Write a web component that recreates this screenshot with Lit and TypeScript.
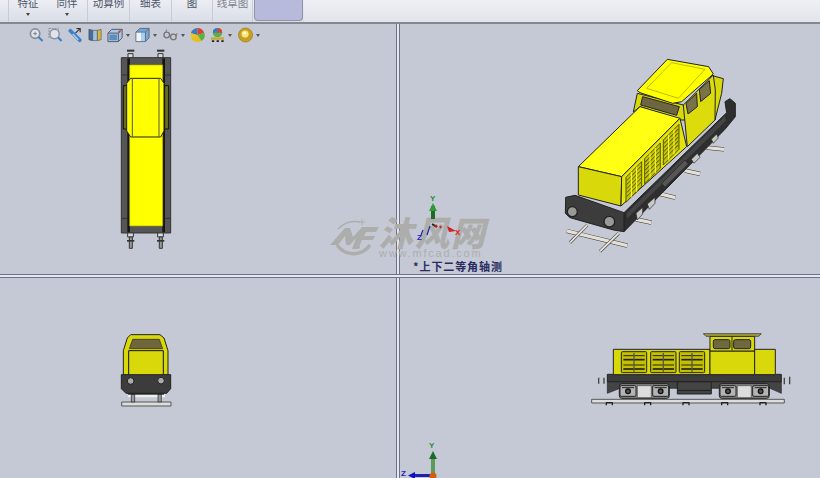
import { LitElement, html, css, svg } from "lit";
import { customElement } from "lit/decorators.js";

const bar = (x1: number, y1: number, x2: number, y2: number, w: number, c = "#e4e0d4") => svg`
  <line x1=${x1} y1=${y1} x2=${x2} y2=${y2} stroke="#333" stroke-width=${w + 3}/>
  <line x1=${x1} y1=${y1} x2=${x2} y2=${y2} stroke=${c} stroke-width=${w}/>`;

const topView = svg`
<g transform="translate(100 45) scale(.3333)" stroke-linejoin="round">
  ${[92, 182].map((x) => svg`
    <rect x=${x - 11} y="14" width="22" height="6" fill="#333"/>
    <rect x=${x - 8} y="26" width="15" height="13" fill="#ddd" stroke="#333" stroke-width="3"/>
    <rect x=${x - 9} y="562" width="17" height="14" fill="#ddd" stroke="#333" stroke-width="3"/>
    <rect x=${x - 4} y="576" width="9" height="34" fill="#999" stroke="#333" stroke-width="3"/>
    <rect x=${x - 11} y="585" width="22" height="5" fill="#333"/>`)}
  <rect x="64" y="38" width="148" height="526" fill="#555" stroke="#333" stroke-width="3"/>
  <path d="M64 520 H82 M194 520 H212 M64 90 H82 M194 90 H212" stroke="#333" stroke-width="3"/>
  <rect x="82" y="40" width="8" height="522" fill="#151515"/>
  <rect x="187" y="40" width="8" height="522" fill="#151515"/>
  <rect x="89" y="60" width="99" height="483" fill="#ffff00" stroke="#a8a800" stroke-width="2"/>
  <rect x="70" y="122" width="12" height="130" fill="#6c6c20" stroke="#111" stroke-width="3"/>
  <rect x="194" y="122" width="12" height="130" fill="#6c6c20" stroke="#111" stroke-width="3"/>
  <path d="M92 100 H182 L192 115 V258 L182 276 H92 L80 258 V115Z" fill="#ffff00" stroke="#222" stroke-width="3"/>
  <path d="M97 100 V276 M177 100 V276" stroke="#555" stroke-width="3" fill="none"/>
</g>`;

const louvre = (x: number, y: number) => svg`
  <g transform="translate(${x} ${y}) skewY(-45)" fill="none" stroke="#3a3a00" stroke-width="2">
    <rect x="0" y="0" width="47" height="75" fill="#c4c400"/>
    ${[12, 24, 36, 48, 60].map((v) => svg`<line x1="2" y1=${v} x2="45" y2=${v} stroke-width="2.5"/>`)}
    <line x1="16" y1="0" x2="16" y2="75" stroke="#ffff40" stroke-width="3"/>
    <line x1="32" y1="0" x2="32" y2="75" stroke="#ffff40" stroke-width="3"/>
  </g>`;

const isoView = svg`
<g transform="translate(550 50) scale(.3333)" stroke-linejoin="round">
  ${bar(470, 293, 522, 298, 10)}
  ${bar(405, 362, 450, 372, 10)}
  ${bar(330, 432, 376, 443, 10)}
  ${bar(258, 508, 304, 518, 10)}
  ${bar(50, 543, 232, 587, 10)}
  ${bar(60, 578, 112, 525, 6)}
  ${bar(150, 604, 206, 550, 6)}
  <path d="M222 488 L530 188 L525 155 L540 146 L556 160 L556 200 L525 238 L222 545Z" fill="#2e2e2e" stroke="#222" stroke-width="3"/>
  <path d="M230 490 L525 198 L528 212 L232 505Z" fill="#444"/>
  <path d="M258 490 L278 472 V492 L262 510Z M292 462 L315 442 V460 L298 478Z M424 328 L442 310 L450 322 L432 340Z M484 268 L500 252 L505 264 L490 280Z" fill="#c8c8c8" stroke="#222" stroke-width="2"/>
  <path d="M335 400 L405 330 L415 342 L345 412Z" fill="#555" stroke="#222" stroke-width="2"/>
  <path d="M47 442 L75 436 L222 488 V545 L190 540 L60 503 L46 490Z" fill="#3c3c3c" stroke="#222" stroke-width="3"/>
  <circle cx="67" cy="485" r="15" fill="#999" stroke="#222" stroke-width="4"/>
  <circle cx="178" cy="515" r="16" fill="#999" stroke="#222" stroke-width="4"/>
  <path d="M484 76 L520 86 L515 130 L495 210 L478 100Z" fill="#d8d80a" stroke="#222" stroke-width="3"/>
  <path d="M250 186 L262 130 L400 165 L412 210 L390 210 L270 170Z" fill="#d8d80a" stroke="#222" stroke-width="3"/>
  <path d="M278 140 L388 170 L380 196 L272 165Z" fill="#6e6640" stroke="#222" stroke-width="3"/>
  <path d="M400 165 L490 75 L496 120 L495 210 L412 290 Z" fill="#dcdc0c" stroke="#222" stroke-width="3"/>
  <path d="M408 160 L440 130 L442 170 L414 192Z M448 118 L478 92 L482 130 L452 155Z" fill="#7a7248" stroke="#222" stroke-width="3"/>
  <path d="M262 122 L352 28 L476 50 L490 72 L395 155 L368 160 L270 128Z" fill="#ffff00" stroke="#222" stroke-width="3"/>
  <path d="M290 115 L365 38 L465 58 L385 145Z" fill="#ffff00" stroke="#999900" stroke-width="2"/>
  <path d="M85 350 L270 170 L390 205 L215 380Z" fill="#ffff14" stroke="#222" stroke-width="3"/>
  <path d="M85 350 L215 380 L213 468 L85 435Z" fill="#d8d80a" stroke="#222" stroke-width="3"/>
  <path d="M215 380 L390 205 L410 290 L213 468Z" fill="#e4e40c" stroke="#222" stroke-width="3"/>
  ${louvre(228, 382)}
  ${louvre(284, 326)}
  ${louvre(340, 270)}
</g>`;

const frontView = svg`
<g transform="translate(100 320) scale(.3333)" stroke-linejoin="round">
  <rect x="65" y="246" width="148" height="12" fill="#ddd" stroke="#555" stroke-width="3"/>
  <path d="M84 220 H195 V232 H84Z" fill="#eee"/>
  <rect x="94" y="222" width="10" height="24" fill="#999" stroke="#222" stroke-width="2"/>
  <rect x="174" y="222" width="10" height="24" fill="#999" stroke="#222" stroke-width="2"/>
  <rect x="84" y="218" width="108" height="6" fill="#222"/>
  <path d="M92 44 H180 L192 54 L204 92 V165 H70 V92 L82 54Z" fill="#d8d80a" stroke="#222" stroke-width="3"/>
  <path d="M98 58 H178 L188 86 H88Z" fill="#70663e" stroke="#222" stroke-width="2"/>
  <path d="M86 165 V92 H190 V165" fill="#d8d80a" stroke="#111" stroke-width="3"/>
  <path d="M64 164 H212 V206 L200 220 H78 L64 206Z" fill="#3c3c3c" stroke="#222" stroke-width="3"/>
  <circle cx="92" cy="183" r="10" fill="#aaa" stroke="#222" stroke-width="3"/>
  <circle cx="183" cy="182" r="10" fill="#aaa" stroke="#222" stroke-width="3"/>
</g>`;

const bogie = (x: number) => svg`
  <rect x=${x} y="176" width="150" height="44" rx="8" fill="#888" stroke="#222" stroke-width="3"/>
  <rect x=${x + 54} y="182" width="42" height="36" fill="#dcdcdc" stroke="#444" stroke-width="2"/>
  ${[x + 26, x + 124].map((cx) => svg`
    <rect x=${cx - 24} y="182" width="48" height="32" rx="4" fill="#b4b4b4" stroke="#222" stroke-width="3"/>
    <circle cx=${cx} cy="199" r="7" fill="#555" stroke="#111" stroke-width="4"/>
    <path d="M${cx - 18} 188 h36" stroke="#222" stroke-width="3"/>`)}`;

const sideView = svg`
<g transform="translate(580 325) scale(.3333)" stroke-linejoin="round">
  <rect x="35" y="223" width="578" height="11" fill="#ddd" stroke="#555" stroke-width="3"/>
  ${[88, 203, 318, 434, 549].map((x) => svg`<path d="M${x - 9} 241 V233 H${x + 9} V241" fill="none" stroke="#222" stroke-width="4"/>`)}
  <path d="M56 158 V176 M72 158 V176 M613 158 V178 M629 155 V178" stroke="#444" stroke-width="4" fill="none"/>
  <path d="M82 170 H604 V205 L570 190 H120 L82 205Z" fill="#444" stroke="#222" stroke-width="2"/>
  <rect x="292" y="170" width="102" height="37" fill="#444" stroke="#222" stroke-width="3"/>
  <rect x="294" y="195" width="98" height="3" fill="#222"/>
  ${bogie(118)}
  ${bogie(418)}
  <rect x="82" y="148" width="522" height="22" fill="#3c3c3c" stroke="#222" stroke-width="3"/>
  <rect x="100" y="73" width="290" height="76" fill="#d8d80a" stroke="#222" stroke-width="3"/>
  <rect x="390" y="78" width="134" height="71" fill="#d8d80a" stroke="#222" stroke-width="3"/>
  <rect x="524" y="73" width="62" height="76" fill="#d8d80a" stroke="#222" stroke-width="3"/>
  <rect x="390" y="34" width="134" height="44" fill="#d8d80a" stroke="#222" stroke-width="3"/>
  <path d="M370 26 H544 L536 34 H378Z" fill="#a8a040" stroke="#222" stroke-width="2"/>
  <rect x="400" y="44" width="50" height="27" rx="5" fill="#70683e" stroke="#222" stroke-width="3"/>
  <rect x="461" y="44" width="51" height="27" rx="5" fill="#70683e" stroke="#222" stroke-width="3"/>
  <path d="M456 36 V76" stroke="#222" stroke-width="3"/>
  ${[124, 212, 298].map((x) => svg`
    <rect x=${x} y="80" width="76" height="63" rx="3" fill="#c4c000" stroke="#222" stroke-width="3"/>
    ${[92, 104, 120, 132].map((y) => svg`<line x1=${x + 6} y1=${y} x2=${x + 70} y2=${y} stroke="#222" stroke-width=${y === 104 || y === 132 ? 5 : 3}/>`)}
    <line x1=${x + 38} y1="84" x2=${x + 38} y2="140" stroke="#555" stroke-width="4"/>`)}
</g>`;

const icons = [
  svg`<circle cx="6.5" cy="6.5" r="5" fill="#dfe3ea" stroke="#8a8f98" stroke-width="1.8"/><path d="M4.5 6.5h4M6.5 4.5v4" stroke="#7a7f88"/><path d="M10 10l4.5 4.5" stroke="#3f7fc4" stroke-width="2.2"/>`,
  svg`<rect x="1" y="1" width="10" height="10" fill="none" stroke="#8a8f98" stroke-dasharray="2 1"/><circle cx="7" cy="7" r="5" fill="#dfe3ea" stroke="#8a8f98" stroke-width="1.5"/><path d="M10.5 10.5l4 4" stroke="#3f7fc4" stroke-width="2.2"/>`,
  svg`<path d="M2.5 3.5l10 10" stroke="#3f7fc4" stroke-width="4" stroke-linecap="round"/><path d="M5 7l6 6" stroke="#a8d0f0" stroke-width="1.6"/><path d="M8 6l5-5M9 1h4v4" stroke="#333" fill="none" stroke-width="1.2"/>`,
  svg`<path d="M1 2l4 1v11l-4-1Z" fill="#3f6fa8" stroke="#444" stroke-width=".7"/><path d="M5 3h5v11H5Z" fill="#9fc2e4" stroke="#555" stroke-width=".7"/><path d="M10 3l4-1v11l-4 1Z" fill="#d4b83c" stroke="#555" stroke-width=".7"/>`,
  svg`<path d="M1 6l4-4h11v9l-4 4H1Z" fill="#a8c8e8" stroke="#555"/><path d="M1 6h11v9M12 6l4-4" fill="none" stroke="#555"/><rect x="2.5" y="7.5" width="8" height="6" fill="#5c8cc4"/><circle cx="13" cy="4.5" r="1.2" fill="#d04040"/>`,
  svg`<path d="M1 5l4-4h10v10l-4 4H1Z" fill="#6ea8e4" stroke="#666"/><path d="M1 5h10v10M11 5l4-4" fill="none" stroke="#666"/><rect x="1.5" y="5.5" width="5" height="9" fill="#f0f4f8"/><rect x="6.5" y="5.5" width="4" height="9" fill="#a8d0f4"/>`,
  svg`<circle cx="4" cy="8" r="3" fill="none" stroke="#777" stroke-width="1.4"/><circle cx="11" cy="10" r="3" fill="none" stroke="#777" stroke-width="1.4"/><path d="M7 8l1 1M14 9l1-3M3 5l1-3" stroke="#777" fill="none"/>`,
  svg`<circle cx="8" cy="8" r="7.5" fill="#e8c828"/><path d="M8 8V.5a7.5 7.5 0 0 1 7 5Z" fill="#d84040"/><path d="M8 8L1 6A7.5 7.5 0 0 1 8 .5Z" fill="#3c78c8"/><path d="M8 8l7-2.500A7.5 7.5 0 0 1 12 14.500Z" fill="#58b048"/><path d="M8 8l4 6.500a7.5 7.5 0 0 1-10.500-3Z" fill="#e4c020"/>`,
  svg`<circle cx="8" cy="5.500" r="5" fill="#58b048"/><path d="M8 .5a5 5 0 0 1 5 5H8Z" fill="#d84040"/><path d="M8 .5a5 5 0 0 0-5 5h5Z" fill="#3c78c8"/><path d="M1 10.500h14v2.500H1Z" fill="#c8a830"/><path d="M2 14.500h2.500M7 14.500h2.500M12 14.500h2.500" stroke="#222" stroke-width="2"/>`,
  svg`<circle cx="8" cy="8" r="7.500" fill="#c8a020" stroke="#907010" stroke-width=".6"/><circle cx="7.500" cy="7" r="3.800" fill="#f8e878"/><circle cx="7" cy="6" r="1.600" fill="#fffbe0"/>`,
];
const widths = [15, 15, 15, 15, 17, 16, 16, 16, 16, 16];
const slots = [19, 20, 20, 19, 28, 28, 27, 20, 28, 24];
const carets = [0, 0, 0, 0, 1, 1, 1, 0, 1, 1];

@customElement("app-root")
export class AppRoot extends LitElement {
  static styles = css`
    :host { display: block; width: 820px; height: 478px; overflow: hidden; position: relative; background: #c5c9d6; font-family: "Noto Sans CJK SC", "Liberation Sans", sans-serif; }
    .ribbon { display: flex; height: 22px; background: linear-gradient(#eceef3, #d9dde7); border-bottom: 2px solid #85898f; box-sizing: content-box; }
    .tab { position: relative; display: flex; justify-content: center; height: 22px; overflow: hidden; font-size: 10.5px; color: #4c5568; border-right: 1px solid #c8ccd6; box-sizing: border-box; line-height: 11px; }
    .tab span { margin-top: -3px; }
    .tab i { position: absolute; left: 50%; top: 13px; margin-left: -2px; width: 0; height: 0; border: 2.5px solid transparent; border-top: 3px solid #444; }
    .t0 { width: 9px; } .t1 { width: 38px; border-right: none; } .t2 { width: 41px; } .t3 { width: 42px; } .t4 { width: 42px; } .t5 { width: 41px; } .t6 { width: 40px; color: #7f8492; }
    .active { width: 49px; height: 21px; margin-left: 1px; background: #b7badb; border: 1px solid #8f93a8; border-top: none; border-radius: 0 0 4px 4px; box-sizing: border-box; }
    .rest { flex: 1; background: linear-gradient(#eff0f4, #e2e4ec); margin-left: 1px; }
    .view { display: grid; grid-template-columns: 396px 4px 1fr; grid-template-rows: 250px 4px 1fr; height: 454px; }
    .pane { position: relative; overflow: hidden; }
    .pane svg.art { position: absolute; inset: 0; width: 100%; height: 100%; }
    .vline { grid-column: 2; grid-row: 1 / 4; background: #e6e8ee; border-left: 1px solid #6d7189; border-right: 1px solid #6d7189; }
    .hline { grid-column: 1 / 4; grid-row: 2; background: #e6e8ee; border-top: 1px solid #6d7189; border-bottom: 1px solid #6d7189; position: relative; }
    .hud { position: absolute; left: 29px; top: 3px; display: flex; align-items: center; z-index: 1; }
    .hud .it { display: flex; align-items: center; gap: 2px; }
    .hud svg { display: block; height: 16px; }
    .hud i { width: 0; height: 0; border: 2.5px solid transparent; border-top: 3px solid #555; margin-top: 3px; }
    .over { position: absolute; inset: 0; pointer-events: none; }
    .wm { position: absolute; left: 325px; top: 212px; display: flex; align-items: flex-start; }
    .wm-text { margin-top: 5px; display: flex; flex-direction: column; color: #adaeac; }
    .wm-cn { font-size: 34px; font-weight: 900; line-height: 30px; letter-spacing: 2px; font-style: italic; white-space: nowrap; }
    .wm-en { font-family: "Liberation Sans", sans-serif; font-size: 11px; line-height: 12px; letter-spacing: 1.8px; white-space: nowrap; }
    .cap { position: absolute; left: 413px; top: 259px; font-size: 11px; font-weight: 700; color: #2a2c62; line-height: 14px; letter-spacing: .9px; }
    .ax { position: absolute; font-family: "Liberation Sans", sans-serif; font-size: 8px; font-weight: 700; line-height: 8px; }
  `;

  render() {
    return html`
      <div class="ribbon">
        <div class="tab t0"></div>
        <div class="tab t1"><span>特征</span><i></i></div>
        <div class="tab t2"><span>同伴</span><i></i></div>
        <div class="tab t3"><span>动算例</span></div>
        <div class="tab t4"><span>细表</span></div>
        <div class="tab t5"><span>图</span></div>
        <div class="tab t6"><span>线草图</span></div>
        <div class="active"></div>
        <div class="rest"></div>
      </div>
      <div class="view">
        <div class="pane" style="grid-column:1;grid-row:1">
          <div class="hud">
            ${icons.map((p, i) => html`<div class="it" style="width:${slots[i]}px"><svg viewBox="0 0 ${widths[i] + 1} 16" width=${widths[i]}>${p}</svg>${carets[i] ? html`<i></i>` : ""}</div>`)}
          </div>
          <svg class="art" viewBox="0 24 396 250">${topView}</svg>
        </div>
        <div class="pane" style="grid-column:3;grid-row:1">
          <svg class="art" viewBox="400 24 420 250">
            ${isoView}
          </svg>
        </div>
        <div class="vline"></div>
        <div class="hline"></div>
        <div class="pane" style="grid-column:1;grid-row:3">
          <svg class="art" viewBox="0 278 396 200">${frontView}</svg>
        </div>
        <div class="pane" style="grid-column:3;grid-row:3">
          <svg class="art" viewBox="400 278 420 200">
            ${sideView}
            <path d="M433 478 V456" stroke="#5a9a5a" stroke-width="4"/>
            <path d="M433 451 L429 459 H437Z" fill="#1f6a2a"/>
            <path d="M412 475.500 H431" stroke="#2020b0" stroke-width="3"/>
            <path d="M408 475.500 L415 472 V479Z" fill="#1010c0"/>
            <circle cx="433" cy="476" r="3.500" fill="#d06010"/>
          </svg>
          <span class="ax" style="left:29px;top:164px;color:#2a8a3a">Y</span>
          <span class="ax" style="left:1px;top:192px;color:#2020c0">Z</span>
        </div>
      </div>
      <div class="over">
        <div class="wm">
          <svg width="54" height="52" viewBox="0 0 54 52">
            <path d="M13 17 A24 24 0 0 1 35 10" fill="none" stroke="#adaeac" stroke-width="1.500"/>
            <path d="M12 33 A20 20 0 0 0 45 33" fill="none" stroke="#adaeac" stroke-width="3.500"/>
            <path d="M5 33 L20 16 H25 L28 25 L37 15 H54 L51 20 H41 L39 24 H50 L48 28 H37 L33 37 H27 L31 26 L25 33 H21 L20 24 L13 33Z" fill="#adaeac"/>
            <path d="M37 7 V13 M34 10 H40" stroke="#adaeac" stroke-width="1"/>
            <path d="M31 35 L33 31 L35 35 A2 2 0 0 1 31 35Z" fill="#adaeac"/>
          </svg>
          <div class="wm-text">
            <span class="wm-cn">沐风网</span>
            <span class="wm-en">www.mfcad.com</span>
          </div>
        </div>
        <svg width="820" height="478" style="position:absolute;left:0;top:0">
          <path d="M433 219 V206" stroke="#1f6a2a" stroke-width="4"/>
          <path d="M433 203 L429 211 H437Z" fill="#2f9a3a"/>
          <path d="M430 226 L427 235 M423 230 L421 235" stroke="#2020b0" stroke-width="1.200"/>
          <path d="M432 224 L437 227" stroke="#222" stroke-width="2"/>
          <path d="M447 226 L456 231 L449 232Z" fill="#d02020"/>
          <path d="M440 226 L441 228" stroke="#d02020" stroke-width="2"/>
          <circle cx="436" cy="226" r="1.500" fill="#c02020"/>
        </svg>
        <span class="ax" style="left:430px;top:195px;color:#2a8a3a">Y</span>
        <span class="ax" style="left:455px;top:229px;color:#e02020">X</span>
        <span class="ax" style="left:417px;top:234px;color:#2020c0">Z</span>
        <span class="cap">*上下二等角轴测</span>
      </div>
    `;
  }
}
